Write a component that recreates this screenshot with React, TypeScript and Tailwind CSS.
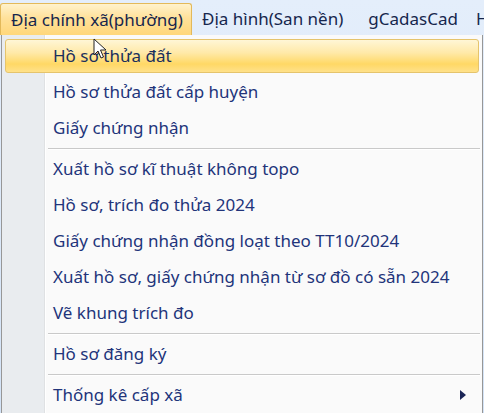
const groups = [
  ['Hồ sơ thửa đất', 'Hồ sơ thửa đất cấp huyện', 'Giấy chứng nhận'],
  [
    'Xuất hồ sơ kĩ thuật không topo',
    'Hồ sơ, trích đo thửa 2024',
    'Giấy chứng nhận đồng loạt theo TT10/2024',
    'Xuất hồ sơ, giấy chứng nhận từ sơ đồ có sẵn 2024',
    'Vẽ khung trích đo',
  ],
  ['Hồ sơ đăng ký'],
  ['Thống kê cấp xã'],
]

function Cursor() {
  return (
    <svg className="absolute left-[93px] top-[38px]" width="14" height="22" viewBox="0 0 14 22">
      <path d="M1 1 L1 17 L5 13 L8 20 L10.5 19 L7.5 12 L13 12 Z" fill="#fff" stroke="#222" strokeWidth="1" strokeLinejoin="round" />
    </svg>
  )
}

export default function App() {
  return (
    <div className="relative w-[484px] h-[413px] overflow-hidden bg-[linear-gradient(to_bottom,#e4eefb,#d3e3f7)] font-['Noto_Sans','Open_Sans',sans-serif] text-[17px]">
      {/* menu bar */}
      <div className="flex h-[35px] items-end whitespace-nowrap text-[#16264d]">
        <div className="h-[32px] shrink-0 flex items-center pl-[10px] w-[192px] rounded-t-[3px] border border-b-0 border-[#e3b95a] bg-[linear-gradient(to_bottom,#fff2cc,#ffe19a_45%,#ffd77a)]">
          Địa chính xã(phường)
        </div>
        <div className="h-[32px] shrink-0 flex items-center pl-[10px] pr-[25px]">Địa hình(San nền)</div>
        <div className="h-[32px] shrink-0 flex items-center pr-[18px]">gCadasCad</div>
        <div className="h-[32px] shrink-0 flex items-center">Hỗ trợ</div>
      </div>

      {/* dropdown */}
      <div className="ml-[1px] w-[482px] h-[378px] border-x border-[#979797] pt-[3px] bg-[linear-gradient(to_right,#e9ecef_0,#e9ecef_42px,#dfe1e3_42px,#dfe1e3_43px,#ffffff_43px,#ffffff_44px,#fafafa_44px)] text-[#22347a]">
        {groups.map((items, gi) => (
          <div key={gi}>
            {gi > 0 && (
              <div className="h-[5px] flex items-center pl-[46px] pr-[2px]">
                <div className="w-full border-t border-b border-t-[#c9c9c9] border-b-white" />
              </div>
            )}
            {items.map((label, ii) => {
              const active = gi === 0 && ii === 0
              const sub = label === 'Thống kê cấp xã'
              return (
                <div key={label} className="h-[36px] px-[3px] py-[1px]">
                  <div
                    className={
                      active
                        ? 'h-full flex items-center pl-[47px] pr-[12px] rounded-[3px] border border-[#e5c46c] bg-[linear-gradient(to_bottom,#fff6d6,#ffe9a8_40%,#ffd865_75%,#ffe18a)] text-[#1b2f5c]'
                        : 'h-full flex items-center pl-[48px] pr-[13px]'
                    }
                  >
                    <span className="flex-1 whitespace-nowrap">{label}</span>
                    {sub && (
                      <svg width="6" height="10" viewBox="0 0 6 10">
                        <path d="M0 0 L6 5 L0 10 Z" fill="#1a2456" />
                      </svg>
                    )}
                  </div>
                </div>
              )
            })}
          </div>
        ))}
      </div>
      <Cursor />
    </div>
  )
}
